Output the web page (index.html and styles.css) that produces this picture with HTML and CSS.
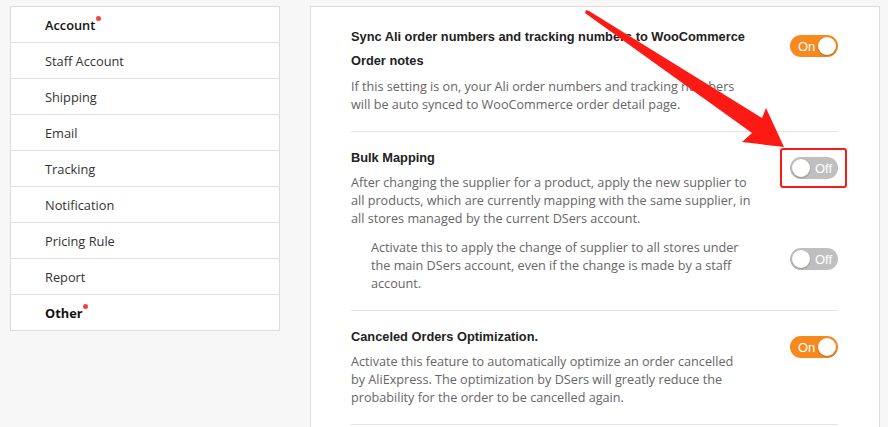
FILE: index.html
```html
<!DOCTYPE html>
<html lang="en">
<head>
<meta charset="utf-8">
<title>Settings - Other</title>
<link rel="stylesheet" href="styles.css">
</head>
<body>
<div class="page">
  <nav class="sidebar">
    <div class="nav-item strong1"><span class="dotted">Account</span></div>
    <div class="nav-item">Staff Account</div>
    <div class="nav-item">Shipping</div>
    <div class="nav-item">Email</div>
    <div class="nav-item">Tracking</div>
    <div class="nav-item">Notification</div>
    <div class="nav-item">Pricing Rule</div>
    <div class="nav-item">Report</div>
    <div class="nav-item strong2"><span class="dotted">Other</span></div>
  </nav>
  <main class="panel">
    <section class="section first">
      <div class="row">
        <div class="text">
          <h3 class="title">Sync Ali order numbers and tracking numbers to WooCommerce<br>Order notes</h3>
          <p class="desc">If this setting is on, your Ali order numbers and tracking numbers<br>will be auto synced to WooCommerce order detail page.</p>
        </div>
        <div class="switch on"><span class="label">On</span><span class="knob"></span></div>
      </div>
    </section>
    <section class="section">
      <div class="row">
        <div class="text">
          <h3 class="title">Bulk Mapping</h3>
          <p class="desc">After changing the supplier for a product, apply the new supplier to<br>all products, which are currently mapping with the same supplier, in<br>all stores managed by the current DSers account.</p>
        </div>
        <div class="switch off highlighted"><span class="knob"></span><span class="label">Off</span><span class="redbox"></span></div>
      </div>
      <div class="row sub">
        <div class="text">
          <p class="desc">Activate this to apply the change of supplier to all stores under<br>the main DSers account, even if the change is made by a staff<br>account.</p>
        </div>
        <div class="switch off"><span class="knob"></span><span class="label">Off</span></div>
      </div>
    </section>
    <section class="section">
      <div class="row">
        <div class="text">
          <h3 class="title">Canceled Orders Optimization.</h3>
          <p class="desc">Activate this feature to automatically optimize an order cancelled<br>by AliExpress. The optimization by DSers will greatly reduce the<br>probability for the order to be cancelled again.</p>
        </div>
        <div class="switch on"><span class="label">On</span><span class="knob"></span></div>
      </div>
    </section>
  </main>
</div>
<svg class="arrow" width="888" height="427" viewBox="0 0 888 427" aria-hidden="true">
  <polygon points="586,10 589,11 762,118 766,108 784,147 742,142 752,133 585,13" fill="#fd1a14"/>
</svg>
</body>
</html>
```

FILE: styles.css
```css
html, body {
  margin: 0;
  padding: 0;
  background: #f7f7f7;
  height: 100%;
  overflow: hidden;
}

.page {
  display: flex;
  align-items: flex-start;
  gap: 30px;
  padding: 6px 8px 0 10px;
}

.sidebar {
  width: 268px;
  flex: none;
  background: #fff;
  border: 1px solid #dcdcdc;
  font-family: "Open Sans", "Noto Sans", sans-serif;
  font-size: 12.8px;
  color: #333;
}

.nav-item {
  height: 34px;
  line-height: 34px;
  padding-top: 1px;
  padding-left: 34px;
  border-bottom: 1px solid #e1e1e1;
}

.nav-item:last-child {
  border-bottom: none;
}

.strong1 {
  font-weight: 600;
  color: #111;
}

.strong2 {
  font-weight: 700;
  color: #111;
}

.dotted {
  position: relative;
}

.dotted::after {
  content: "";
  position: absolute;
  right: -6px;
  top: 0;
  width: 5px;
  height: 5px;
  border-radius: 50%;
  background: #f5433f;
}

.strong2 .dotted::after {
  right: -5px;
}

.panel {
  flex: 1;
  background: #fff;
  border: 1px solid #dcdcdc;
  border-bottom: none;
  padding: 5px 41px 0 40px;
  min-height: 440px;
}

.section {
  padding: 14px 0 18px;
  border-bottom: 1px solid #e4e4e4;
}

.section.first {
  padding-top: 13px;
}

.row {
  display: flex;
  justify-content: space-between;
  align-items: flex-start;
}

.row.sub {
  padding-left: 20px;
  margin-top: 11px;
}

.text {
  flex: 1;
}

.title {
  margin: 0;
  font-family: "Liberation Sans", Arial, sans-serif;
  font-weight: 700;
  font-size: 12.8px;
  line-height: 24px;
  color: #222;
}

.desc {
  margin: 3px 0 0;
  font-family: "Open Sans", "Noto Sans", sans-serif;
  font-size: 12.65px;
  line-height: 18px;
  color: #666;
  white-space: nowrap;
}

.section.first .desc {
  margin-top: 4px;
}

.row.sub .desc {
  margin-top: 0;
}

.switch {
  position: relative;
  flex: none;
  width: 48px;
  height: 22px;
  border-radius: 11px;
  margin-top: 11px;
  display: flex;
  align-items: center;
  box-sizing: border-box;
  padding: 0 2px;
  font-family: "Liberation Sans", Arial, sans-serif;
  font-size: 13px;
  color: #fff;
}

.section.first .switch {
  margin-top: 10px;
}

.row.sub .switch {
  margin-top: 10px;
}

.switch.on {
  background: #f7891f;
  justify-content: space-between;
  padding-left: 8px;
}

.switch.off {
  background: #bfbfbf;
  justify-content: space-between;
  padding-right: 6px;
}

.knob {
  width: 18px;
  height: 18px;
  border-radius: 50%;
  background: #fff;
  box-shadow: 0 1px 2px rgba(0, 0, 0, 0.25);
}

.redbox {
  position: absolute;
  left: -10px;
  top: -9px;
  width: 63px;
  height: 36px;
  border: 2px solid #fd1a14;
  border-radius: 3px;
}

.arrow {
  position: absolute;
  left: 0;
  top: 0;
  pointer-events: none;
}
```
